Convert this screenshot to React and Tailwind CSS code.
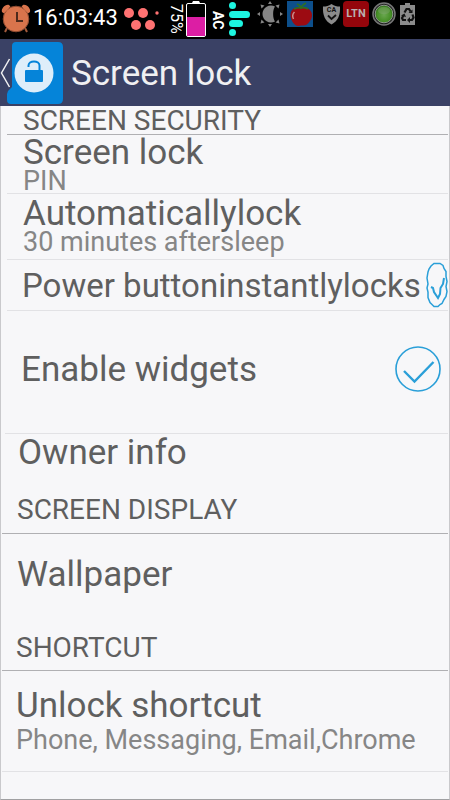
import React, { useState } from 'react';

// Status bar icons
const AlarmIcon = () => (
  <svg className="w-8 h-8 shrink-0" viewBox="0 0 32 32" aria-hidden="true">
    <path d="M7 26l-2 4M25 26l2 4" stroke="#a35a3c" strokeWidth="2" />
    <circle cx="16" cy="17" r="12.8" fill="#d9744c" stroke="#8f4b30" strokeWidth="1" />
    <path d="M2 10c-1-3 3-8 7-7l1.500 1.500-6.500 7zM30 10c1-3-3-8-7-7l-1.500 1.500 6.500 7z" fill="#d9744c" />
    <path d="M17 10v9h6" fill="none" stroke="#4d2a1c" strokeWidth="2" />
  </svg>
);

const DotsIcon = () => (
  <svg className="w-9 h-8 shrink-0" viewBox="0 0 36 32" fill="#ff7272" aria-hidden="true">
    <circle cx="5" cy="11" r="5" />
    <circle cx="19" cy="11" r="5" />
    <circle cx="12" cy="23" r="5" />
    <circle cx="26" cy="23" r="5" />
    <circle cx="33" cy="11" r="1.700" />
  </svg>
);

const BatteryIcon = () => (
  <svg className="w-5 h-9 shrink-0" viewBox="0 0 20 36" aria-hidden="true">
    <path d="M6 2l1-2h6l1 2z" fill="#fff" />
    <rect x=".5" y="2.500" width="19" height="33" rx="1.500" fill="#000" stroke="#fff" />
    <rect x="1" y="16" width="18" height="19" fill="#dc1ea4" />
  </svg>
);

const SignalIcon = () => (
  <svg className="w-[21px] h-9 shrink-0" viewBox="0 0 21 36" fill="#1df5e1" aria-hidden="true">
    <circle cx="3.500" cy="5.500" r="3.500" />
    <rect y="11" width="21" height="7" rx="3.500" />
    <rect y="20" width="14" height="7" rx="3.500" />
    <circle cx="3.500" cy="32.500" r="3.500" />
  </svg>
);

const SunIcon = () => (
  <svg className="w-[26px] h-[26px] shrink-0" viewBox="0 0 26 26" fill="#858585" aria-hidden="true">
    <path d="M13 0l2 3h-4zM13 26l2-3h-4zM0 13l3-2v4zM26 13l-3-2v4zM3.500 3.500l4 1-3 3zM22.500 3.500l-4 1 3 3zM3.500 22.500l1-4 3 3zM22.500 22.500l-1-4-3 3z" />
    <path d="M18 5.500A8.500 8.500 0 1 0 18 20.500C15.500 17 15.500 9 18 5.500z" />
  </svg>
);

const AppleIcon = () => (
  <svg className="w-[26px] h-[26px] shrink-0" viewBox="0 0 26 26" aria-hidden="true">
    <rect width="26" height="26" fill="#0d4f8b" />
    <path d="M14 7c-6-1.500-10.500 1-10.500 7S8 25 11 25c2 0 2-.5 4-.5s4 0 6-2c3-3 5-7 3.500-11S18 5.500 14 7z" fill="#9c0b12" />
    <path d="M7.500 11c-2 2-2 5-1 7" fill="none" stroke="#c98d8d" strokeWidth="1.500" />
    <path d="M14 8c0-3-1-4-4-5M14 7c1-3 3-4 5-5M14 7c-2-1-5 0-7 1M15 7c2-1 4 0 6 1" fill="none" stroke="#2e6f22" strokeWidth="1.800" />
  </svg>
);

const ShieldIcon = () => (
  <svg className="w-[19px] h-[22px] shrink-0" viewBox="0 0 19 22" aria-hidden="true">
    <path d="M9.500 1c3 2 5 2.500 8.500 2.500C18.500 12 16 18 9.500 21.500 3 18 .5 12 1 3.500 4.500 3.500 6.500 3 9.500 1z" fill="#8b8b8b" />
    <text x="9.500" y="9" textAnchor="middle" fontSize="7" fontWeight="700" fill="#111">CA</text>
    <path d="M6 12.500l3.500 3.500 4.500-4" fill="none" stroke="#111" strokeWidth="1.800" />
  </svg>
);

const GreenIcon = () => (
  <svg className="w-6 h-[26px] shrink-0" viewBox="0 0 24 26" aria-hidden="true">
    <defs>
      <radialGradient id="orb" cx="50%" cy="55%" r="55%">
        <stop offset="0%" stopColor="#6aa750" />
        <stop offset="70%" stopColor="#468f26" />
        <stop offset="100%" stopColor="#2a6a14" />
      </radialGradient>
    </defs>
    <circle cx="12" cy="13" r="11" fill="#222" stroke="#777" strokeWidth="1.500" />
    <circle cx="12" cy="13" r="8.800" fill="url(#orb)" stroke="#8c988a" strokeWidth="1" />
    <ellipse cx="12" cy="9.500" rx="6" ry="3.800" fill="#86a878" opacity=".4" />
  </svg>
);

const RecycleBatteryIcon = () => (
  <svg className="w-4 h-6 shrink-0" viewBox="0 0 16 24" aria-hidden="true">
    <path d="M0 3h5V1h5v2h5v20H0z" fill="#8b8b8b" />
    <path
      d="M4.500 10.500l2-3.500h2.500l1.500 2.500M12.500 12.500l1 3-1.500 2.500H9.500M6 18H3L2 16l1.500-2.500"
      fill="none"
      stroke="#111"
      strokeWidth="2.200"
    />
    <path d="M8.500 11h4V7.500zM10 15v6l-3-3zM1 13.500l3.500-2 1.500 3.500z" fill="#111" />
  </svg>
);

// Header icons
const BackIcon = () => (
  <svg className="w-3 h-[66px] shrink-0" viewBox="0 0 12 66" aria-hidden="true">
    <path d="M9.500 19L1.500 33l8 14" fill="none" stroke="#f0f0f2" strokeWidth="1.500" />
  </svg>
);

const LockTile = () => (
  <svg className="w-14 h-[62px] shrink-0" viewBox="0 0 56 62" aria-hidden="true">
    <path d="M9 0h42q5 0 5 5v52q0 5-5 5H4q-4 0-4-4V52q0-3 3-5l2-2V4q0-4 4-4z" fill="#0584d9" />
    <circle cx="27" cy="31" r="19.500" fill="#deeefa" />
    <rect x="18" y="28" width="18" height="12" rx="1" fill="#0584d9" />
    <path d="M21.500 25v-1.500a5.500 4 0 0 1 11 0V29" fill="none" stroke="#0584d9" strokeWidth="2" />
  </svg>
);

const NarrowCheck = ({ checked }) => (
  <svg className="w-[22px] h-[46px] shrink-0" viewBox="0 0 22 46" fill="none" stroke="#2a9fd8" aria-hidden="true">
    <path
      d="M8 1.500h6l3 2 1 3 2 3v5l1 5-1 5 1 5-1 5-2 3-2 4-2 1-2 2H8l-2-2-2-2-2-5V30l-1-4 1-4-1-6 1-6 1-3 2-3z"
      strokeWidth="1.500"
    />
    {checked && <path d="M5 25l2 1 1 4 4 6 2-4 .5-6 2.500-4 1-6" strokeWidth="2" />}
  </svg>
);

const RoundCheck = ({ checked }) => (
  <svg className="w-[46px] h-[46px] shrink-0" viewBox="0 0 46 46" fill="none" stroke="#2a9fd8" aria-hidden="true">
    <circle cx="23" cy="23" r="22" strokeWidth="1.600" />
    {checked && <path d="M9 25l10.500 10.500L38.500 16" strokeWidth="2.400" />}
  </svg>
);

const StatusBar = () => (
  <div className="h-[39px] flex bg-black text-white overflow-hidden">
    <div className="h-9 flex items-center">
      <AlarmIcon />
      <span className="w-[92px] pl-px text-[22px] leading-9">16:03:43</span>
      <DotsIcon />
      <span className="w-4 ml-2 pt-0.5 text-base leading-4 [writing-mode:vertical-rl]">75%</span>
      <span className="ml-0.5 pt-0.5"><BatteryIcon /></span>
      <span className="w-4 ml-1 pt-1 text-sm leading-4 font-bold [writing-mode:vertical-rl]">AC</span>
      <span className="ml-[3px]"><SignalIcon /></span>
    </div>
    <div className="h-7 ml-[7px] flex items-center">
      <SunIcon />
      <span className="ml-1"><AppleIcon /></span>
      <span className="ml-[9px]"><ShieldIcon /></span>
      <span className="w-[26px] h-[26px] ml-0.5 rounded bg-[#94050b] text-[#b9b0b0] text-[11px] leading-[26px] font-bold text-center">
        LTN
      </span>
      <span className="ml-[3px]"><GreenIcon /></span>
      <span className="ml-1"><RecycleBatteryIcon /></span>
    </div>
  </div>
);

const SectionTitle = ({ className, children }) => (
  <h2 className={`flex items-center text-[28px] leading-7 text-[#5f5f5f] border-b border-[#b0b0b3] ${className}`}>
    {children}
  </h2>
);

const SettingRow = ({ title, summary, className }) => (
  <button
    type="button"
    className={`flex flex-col justify-center text-left whitespace-nowrap border-[#e2e2e5] ${className}`}
  >
    <span className="text-[35px] leading-8 text-[#5f5f5f]">{title}</span>
    {summary && <span className="text-[27px] leading-6 text-[#868686]">{summary}</span>}
  </button>
);

const CheckRow = ({ title, icon: Icon, className }) => {
  const [checked, setChecked] = useState(true);

  return (
    <label
      className={`relative flex items-center justify-between leading-9 text-[#5f5f5f] whitespace-nowrap border-b border-[#e2e2e5] ${className}`}
    >
      <span className="pt-0.5">{title}</span>
      <input
        type="checkbox"
        className="sr-only"
        checked={checked}
        onChange={(e) => setChecked(e.target.checked)}
      />
      <Icon checked={checked} />
    </label>
  );
};

const App = () => {
  return (
    <div className="min-h-screen flex flex-col bg-[#f7f7f9] font-[Roboto,sans-serif]">
      <StatusBar />

      <header className="h-[67px] flex items-center bg-[#3a4165] text-[#f0f0f2]">
        <button type="button" aria-label="Back" className="flex items-center">
          <BackIcon />
          <span className="-ml-[5px]"><LockTile /></span>
        </button>
        <h1 className="ml-2 pt-0.5 text-[35px] leading-10">Screen lock</h1>
      </header>

      <main className="grow flex flex-col border-x border-[#c9c9cc] border-b border-b-[#a0a0a2] pr-px">
        {/* Screen security */}
        <SectionTitle className="h-[29px] ml-1.5 pl-4 pt-0.5">SCREEN SECURITY</SectionTitle>
        <SettingRow title="Screen lock" summary="PIN" className="h-[59px] ml-1.5 pl-4 pt-0.5 border-b" />
        <SettingRow
          title="Automaticallylock"
          summary="30 minutes aftersleep"
          className="h-[66px] ml-1.5 pl-4 pb-0.5 border-b"
        />
        <CheckRow
          title="Power buttoninstantlylocks"
          icon={NarrowCheck}
          className="h-[51px] ml-1.5 pl-[15px] text-[33px]"
        />
        <CheckRow title="Enable widgets" icon={RoundCheck} className="h-[123px] ml-1 pl-4 pr-[7px] pb-1.5 text-[35px]" />
        <SettingRow title="Owner info" className="h-[38px] ml-px pl-4" />

        {/* Screen display */}
        <SectionTitle className="h-[62px] ml-px pl-[15px] pt-3.5">SCREEN DISPLAY</SectionTitle>
        <SettingRow title="Wallpaper" className="h-[82px] ml-px pl-[15px]" />

        {/* Shortcut */}
        <SectionTitle className="h-[55px] ml-px pl-[14px] pt-2.5">SHORTCUT</SectionTitle>
        <SettingRow
          title="Unlock shortcut"
          summary="Phone, Messaging, Email,Chrome"
          className="h-[101px] ml-px pl-[14px] gap-1.5 border-b"
        />
      </main>
    </div>
  );
};

export default App;
